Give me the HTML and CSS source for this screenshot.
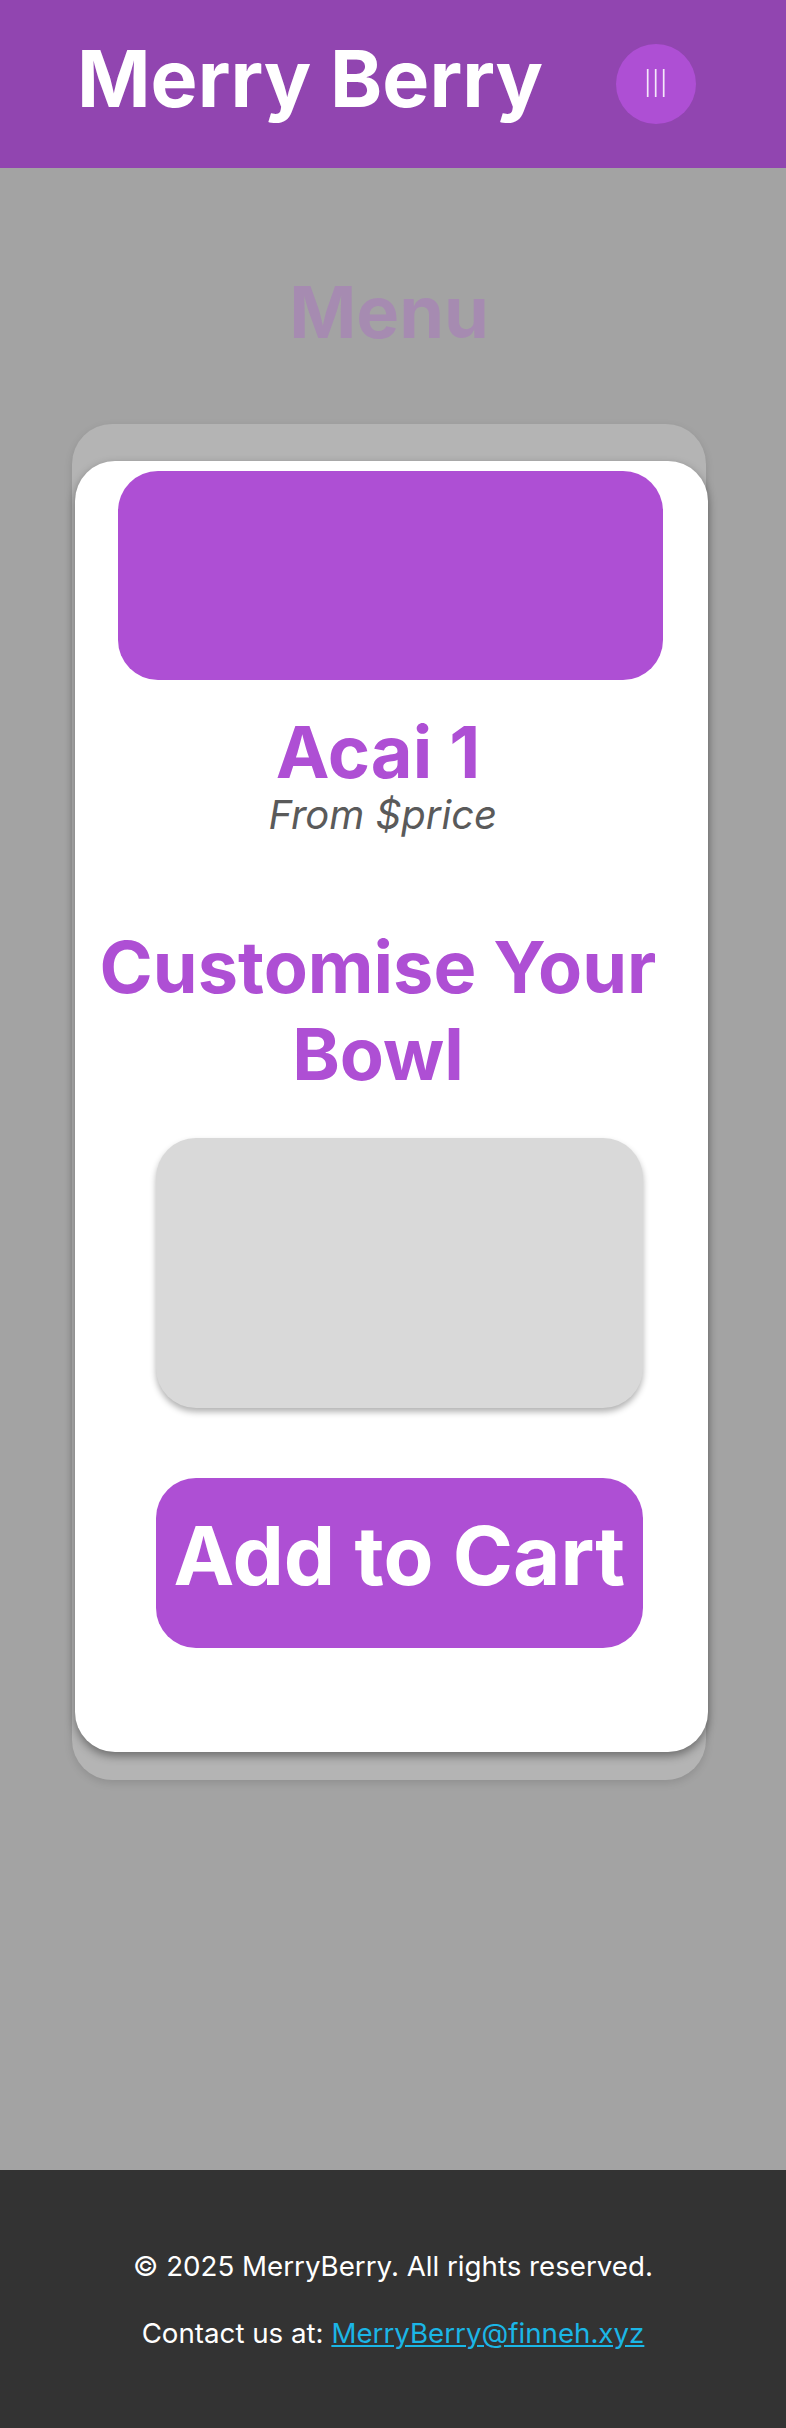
FILE: index.html
```html
<!DOCTYPE html>
<html lang="en">
<head>
<meta charset="utf-8">
<title>Merry Berry</title>
<link rel="stylesheet" href="styles.css">
</head>
<body>
<header class="site-header">
  <h1 class="brand">Merry Berry</h1>
  <button class="menu-btn" aria-label="Menu">
    <svg width="80" height="80" viewBox="0 0 80 80" aria-hidden="true">
      <line x1="31.7" y1="25" x2="31.7" y2="53" />
      <line x1="39.7" y1="25" x2="39.7" y2="53" />
      <line x1="47.7" y1="25" x2="47.7" y2="53" />
    </svg>
  </button>
</header>
<main class="main">
  <h2 class="page-title">Menu</h2>
  <div class="back-card">
    <div class="modal">
      <div class="item-image"></div>
      <h2 class="item-name">Acai 1</h2>
      <p class="item-price">From $price</p>
      <h2 class="custom-title">Customise Your Bowl</h2>
      <div class="options-box"></div>
      <button class="cart-btn">Add to Cart</button>
    </div>
  </div>
</main>
<footer class="site-footer">
  <p>© 2025 MerryBerry. All rights reserved.</p>
  <p>Contact us at: <a href="#" class="mail">MerryBerry@finneh.xyz</a></p>
</footer>
</body>
</html>
```

FILE: styles.css
```css
* { box-sizing: border-box; }
html, body { margin: 0; padding: 0; }
body {
  background: #a3a3a3;
  font-family: "Inter", "Noto Sans", sans-serif;
}
.site-header {
  height: 168px;
  background: #9145b0;
  display: flex;
  justify-content: space-between;
  align-items: flex-start;
  padding: 0 90px 0 77px;
}
.brand {
  margin: 30.5px 0 0 0;
  font-size: 79px;
  font-weight: 700;
  line-height: 1.21;
  color: #ffffff;
}
.menu-btn {
  margin-top: 44px;
  width: 80px;
  height: 80px;
  border-radius: 50%;
  border: none;
  padding: 0;
  background: #ae4fd4;
  display: block;
}
.menu-btn svg { display: block; }
.menu-btn line {
  stroke: #f4e8fa;
  stroke-width: 1.7;
}
.main {
  padding: 100px 80px 390px 72px;
}
.page-title {
  margin: 0 0 69px 0;
  text-align: center;
  font-size: 72px;
  font-weight: 700;
  line-height: 1.21;
  color: #a68bb1;
}
.back-card {
  background: #b4b4b4;
  border-radius: 40px;
  padding: 36.7px 0 28px 0;
  box-shadow: 0 3px 8px rgba(0, 0, 0, 0.12);
}
.modal {
  background: #ffffff;
  border-radius: 40px;
  margin: 0 -2px 0 2.5px;
  padding: 10px 0 104px 0;
  box-shadow: 0 4px 10px rgba(0, 0, 0, 0.4);
  display: flex;
  flex-direction: column;
}
.item-image {
  height: 209.3px;
  margin: 0 45.5px 0 43px;
  background: #ae4fd4;
  border-radius: 40px;
}
.item-name {
  margin: 31.8px 26.5px 0 0;
  text-align: center;
  font-size: 72px;
  font-weight: 700;
  line-height: 80px;
  color: #ae4fd4;
}
.item-price {
  margin: 0 17px 0 0;
  text-align: center;
  font-size: 40px;
  font-style: italic;
  line-height: 45.3px;
  color: #5a5a5a;
}
.custom-title {
  margin: 85.8px 26.5px 0 0;
  text-align: center;
  font-size: 72px;
  font-weight: 700;
  line-height: 1.21;
  color: #ae4fd4;
}
.options-box {
  height: 270px;
  margin: 40.9px 65.5px 0 81.5px;
  background: #d9d9d9;
  border-radius: 40px;
  box-shadow: 0 4px 6px rgba(0, 0, 0, 0.3);
}
.cart-btn {
  height: 170px;
  margin: 70px 65.5px 0 81.5px;
  padding: 29px 0 0 0;
  border: none;
  border-radius: 40px;
  background: #ae4fd4;
  color: #ffffff;
  font-family: "Inter", "Noto Sans", sans-serif;
  font-size: 81.5px;
  font-weight: 700;
  line-height: 1.21;
  text-align: center;
  white-space: nowrap;
  display: flex;
  justify-content: center;
  align-items: flex-start;
}
.site-footer {
  background: #333333;
  color: #ffffff;
  padding: 47.5px 0;
  text-align: center;
  font-size: 27.7px;
}
.site-footer p {
  margin: 29px 0;
  line-height: 38px;
}
.mail {
  color: #1bb6e6;
  text-decoration: underline;
}
```
